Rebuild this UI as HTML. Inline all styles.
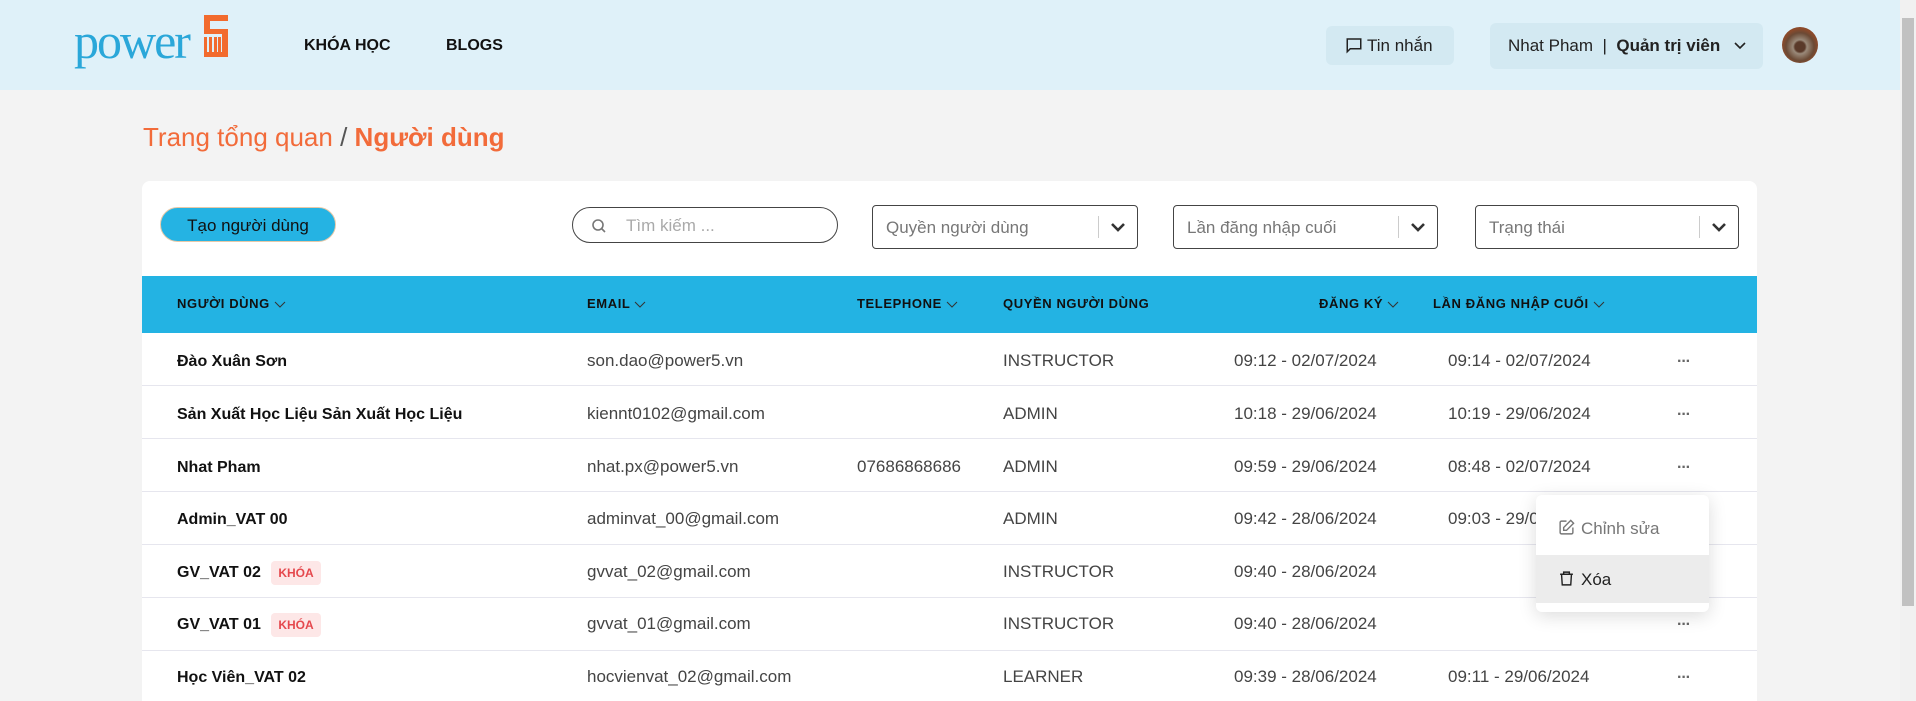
<!DOCTYPE html>
<html><head><meta charset="utf-8"><style>
*{margin:0;padding:0;box-sizing:border-box}
html,body{width:1916px;height:701px;overflow:hidden}
body{background:#f3f3f3;font-family:"Liberation Sans","Noto Sans CJK SC",sans-serif;position:relative;color:#333}
.a{position:absolute}
.hdr{left:0;top:0;width:1900px;height:90px;background:#dff1f9}
.nav{font-weight:bold;font-size:16px;color:#111;top:37px}
.sb{left:1900px;top:0;width:16px;height:701px;background:#f1f1f1}
.thumb{left:1902px;top:18px;width:12px;height:588px;background:#c1c1c1}
.card{left:142px;top:181px;width:1615px;height:530px;background:#fff;border-radius:8px}
.sel{top:205px;height:44px;border:1px solid #444;border-radius:4px;background:#fff;font-size:17px;color:#777;padding:12px 0 0 13px}
.sel .d{position:absolute;right:38px;top:10px;width:1px;height:22px;background:#ccc}
.sel svg{position:absolute;right:11px;top:15px}
.th{left:142px;top:276px;width:1615px;height:57px;background:#23b3e3}
.hc{top:296px;font-size:13px;font-weight:bold;color:#111;letter-spacing:.6px}
.hc svg{margin-left:4px;vertical-align:-1px}
.row{left:142px;width:1615px;height:53px;border-bottom:1px solid #e6e6ee}
.t{font-size:17px;color:#444}
.n{font-size:16px;font-weight:bold;color:#111;margin-top:2px}
.dots{font-size:16px;color:#666;letter-spacing:-1px;font-weight:bold;margin-top:6px;margin-left:4px}
.badge{font-size:12px;font-weight:bold;color:#e5484d;background:#fde7e7;border-radius:4px;padding:5px 7px}
</style></head><body>
<div class="a hdr"></div>
<div class="a sb"></div><div class="a thumb"></div>
<div class="a" style="left:74px;top:12px;font-family:'Liberation Serif',serif;font-size:50px;color:#2aa7d9;letter-spacing:-2px">power</div>
<svg class="a" style="left:204px;top:15px" width="24" height="45" viewBox="0 0 24 45"><g fill="#f26b2e"><rect x="0" y="0" width="24" height="6"/><rect x="0" y="0" width="6" height="18"/><rect x="0" y="14" width="24" height="5"/><rect x="18" y="14" width="6" height="28"/><rect x="0" y="37" width="24" height="5"/><rect x="0" y="22" width="3" height="18"/><rect x="5" y="22" width="3" height="18"/><rect x="10" y="22" width="3" height="18"/><rect x="14" y="22" width="3" height="18"/></g></svg>
<div class="a nav" style="left:304px">KHÓA HỌC</div>
<div class="a nav" style="left:446px">BLOGS</div>
<div class="a" style="left:1326px;top:26px;width:128px;height:39px;background:#d3e9f2;border-radius:6px;font-size:17px;color:#222;padding:10px 0 0 19px">
<svg width="18" height="18" viewBox="0 0 24 24" style="vertical-align:-3px;margin-right:4px" fill="none" stroke="#222" stroke-width="2"><path d="M3 4h18v13H7l-4 4z"/></svg>Tin nhắn</div>
<div class="a" style="left:1490px;top:23px;width:273px;height:46px;background:#d3e9f2;border-radius:6px;font-size:17px;color:#222;padding:13px 0 0 18px">Nhat Pham &nbsp;|&nbsp; <b>Quản trị viên</b>
<svg width="14" height="10" viewBox="0 0 14 10" style="margin-left:8px" fill="none" stroke="#222" stroke-width="1.6"><path d="M2 2l5 5 5-5"/></svg></div>
<div class="a" style="left:1782px;top:27px;width:36px;height:36px;border-radius:50%;background:radial-gradient(circle at 50% 55%,#5a3a2a 0 5px,#9a8a7a 7px,#6b4a35 14px,#8b4a2b 18px)"></div>
<div class="a" style="left:143px;top:122px;font-size:26px;color:#f26b3a">Trang tổng quan <span style="color:#555">/</span> <b>Người dùng</b></div>
<div class="a card"></div>
<div class="a" style="left:160px;top:207px;width:176px;height:35px;background:#25b3e3;border-radius:18px;border:1px solid #e8c9a8;font-size:17px;color:#111;text-align:center;padding-top:8px">Tạo người dùng</div>
<div class="a" style="left:572px;top:207px;width:266px;height:36px;border:1px solid #444;border-radius:18px;font-size:17px;color:#aaa;padding:8px 0 0 53px">Tìm kiếm ...
<svg class="a" style="left:18px;top:10px" width="16" height="16" viewBox="0 0 16 16" fill="none" stroke="#777" stroke-width="1.6"><circle cx="7" cy="7" r="5"/><path d="M11 11l3 3"/></svg></div>
<div class="a sel" style="left:872px;width:266px">Quyền người dùng<span class="d"></span><svg width="16" height="12" viewBox="0 0 16 12" fill="none" stroke="#333" stroke-width="2.6"><path d="M2 3l6 6 6-6"/></svg></div>
<div class="a sel" style="left:1173px;width:265px">Lần đăng nhập cuối<span class="d"></span><svg width="16" height="12" viewBox="0 0 16 12" fill="none" stroke="#333" stroke-width="2.6"><path d="M2 3l6 6 6-6"/></svg></div>
<div class="a sel" style="left:1475px;width:264px">Trạng thái<span class="d"></span><svg width="16" height="12" viewBox="0 0 16 12" fill="none" stroke="#333" stroke-width="2.6"><path d="M2 3l6 6 6-6"/></svg></div>
<div class="a th"></div>
<div class="a hc" style="left:177px">NGƯỜI DÙNG<svg width="12" height="8" viewBox="0 0 12 8" fill="none" stroke="#333" stroke-width="1"><path d="M1 1l5 5 5-5"/></svg></div>
<div class="a hc" style="left:587px">EMAIL<svg width="12" height="8" viewBox="0 0 12 8" fill="none" stroke="#333" stroke-width="1"><path d="M1 1l5 5 5-5"/></svg></div>
<div class="a hc" style="left:857px">TELEPHONE<svg width="12" height="8" viewBox="0 0 12 8" fill="none" stroke="#333" stroke-width="1"><path d="M1 1l5 5 5-5"/></svg></div>
<div class="a hc" style="left:1003px">QUYỀN NGƯỜI DÙNG</div>
<div class="a hc" style="left:1319px">ĐĂNG KÝ<svg width="12" height="8" viewBox="0 0 12 8" fill="none" stroke="#333" stroke-width="1"><path d="M1 1l5 5 5-5"/></svg></div>
<div class="a hc" style="left:1433px">LẦN ĐĂNG NHẬP CUỐI<svg width="12" height="8" viewBox="0 0 12 8" fill="none" stroke="#333" stroke-width="1"><path d="M1 1l5 5 5-5"/></svg></div>

<div class="a row" style="top:333px"></div><div class="a row" style="top:386px"></div><div class="a row" style="top:439px"></div><div class="a row" style="top:492px"></div><div class="a row" style="top:545px"></div><div class="a row" style="top:598px"></div>

<div class="a n" style="left:177px;top:351px">Đào Xuân Sơn</div>
<div class="a t" style="left:587px;top:351px">son.dao@power5.vn</div>
<div class="a t" style="left:1003px;top:351px">INSTRUCTOR</div>
<div class="a t" style="left:1234px;top:351px">09:12 - 02/07/2024</div>
<div class="a t" style="left:1448px;top:351px">09:14 - 02/07/2024</div>
<div class="a dots" style="left:1673px;top:347px">···</div>

<div class="a n" style="left:177px;top:404px">Sản Xuất Học Liệu Sản Xuất Học Liệu</div>
<div class="a t" style="left:587px;top:404px">kiennt0102@gmail.com</div>
<div class="a t" style="left:1003px;top:404px">ADMIN</div>
<div class="a t" style="left:1234px;top:404px">10:18 - 29/06/2024</div>
<div class="a t" style="left:1448px;top:404px">10:19 - 29/06/2024</div>
<div class="a dots" style="left:1673px;top:400px">···</div>

<div class="a n" style="left:177px;top:457px">Nhat Pham</div>
<div class="a t" style="left:587px;top:457px">nhat.px@power5.vn</div>
<div class="a t" style="left:857px;top:457px">07686868686</div>
<div class="a t" style="left:1003px;top:457px">ADMIN</div>
<div class="a t" style="left:1234px;top:457px">09:59 - 29/06/2024</div>
<div class="a t" style="left:1448px;top:457px">08:48 - 02/07/2024</div>
<div class="a dots" style="left:1673px;top:453px">···</div>

<div class="a n" style="left:177px;top:509px">Admin_VAT 00</div>
<div class="a t" style="left:587px;top:509px">adminvat_00@gmail.com</div>
<div class="a t" style="left:1003px;top:509px">ADMIN</div>
<div class="a t" style="left:1234px;top:509px">09:42 - 28/06/2024</div>
<div class="a t" style="left:1448px;top:509px">09:03 - 29/06/2024</div>

<div class="a n" style="left:177px;top:562px">GV_VAT 02 <span class="badge" style="margin-left:6px">KHÓA</span></div>
<div class="a t" style="left:587px;top:562px">gvvat_02@gmail.com</div>
<div class="a t" style="left:1003px;top:562px">INSTRUCTOR</div>
<div class="a t" style="left:1234px;top:562px">09:40 - 28/06/2024</div>

<div class="a n" style="left:177px;top:614px">GV_VAT 01 <span class="badge" style="margin-left:6px">KHÓA</span></div>
<div class="a t" style="left:587px;top:614px">gvvat_01@gmail.com</div>
<div class="a t" style="left:1003px;top:614px">INSTRUCTOR</div>
<div class="a t" style="left:1234px;top:614px">09:40 - 28/06/2024</div>
<div class="a dots" style="left:1673px;top:610px">···</div>

<div class="a n" style="left:177px;top:667px">Học Viên_VAT 02</div>
<div class="a t" style="left:587px;top:667px">hocvienvat_02@gmail.com</div>
<div class="a t" style="left:1003px;top:667px">LEARNER</div>
<div class="a t" style="left:1234px;top:667px">09:39 - 28/06/2024</div>
<div class="a t" style="left:1448px;top:667px">09:11 - 29/06/2024</div>
<div class="a dots" style="left:1673px;top:663px">···</div>

<div class="a" style="left:1536px;top:495px;width:173px;height:117px;background:#fff;border-radius:6px;box-shadow:0 4px 18px rgba(0,0,0,.14);overflow:hidden">
<div style="height:60px;padding:24px 0 0 22px;font-size:17px;color:#777">
<svg width="17" height="17" viewBox="0 0 24 24" fill="none" stroke="#777" stroke-width="2" style="vertical-align:-2px;margin-right:6px"><path d="M12 3H5a2 2 0 0 0-2 2v14a2 2 0 0 0 2 2h14a2 2 0 0 0 2-2v-7"/><path d="M18 2l4 4-10 10H8v-4z"/></svg>Chỉnh sửa</div>
<div style="height:48px;background:#ececec;padding:15px 0 0 22px;font-size:17px;color:#222">
<svg width="17" height="17" viewBox="0 0 24 24" fill="none" stroke="#222" stroke-width="2" style="vertical-align:-2px;margin-right:6px"><path d="M3 6h18M8 6V3h8v3M5 6l1 15h12l1-15"/></svg>Xóa</div>
</div>
</body></html>
